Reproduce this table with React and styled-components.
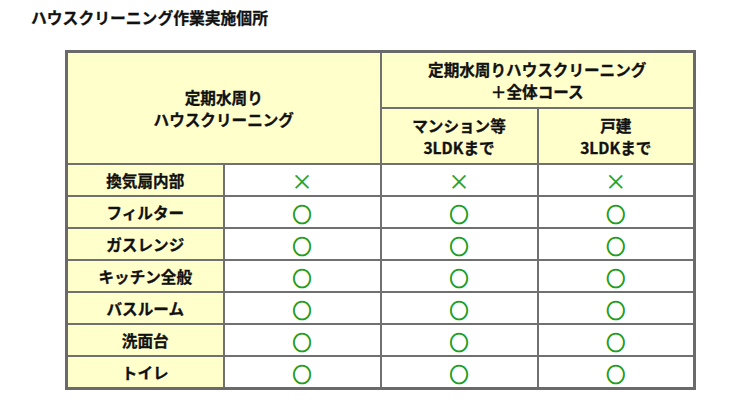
import React from 'react';
import styled, { createGlobalStyle } from 'styled-components';

const GlobalStyle = createGlobalStyle`
  body {
    margin: 0;
    background: #ffffff;
    font-family: "Noto Sans CJK JP", "Noto Sans", sans-serif;
    color: #111111;
  }
`;

const Page = styled.div`
  padding: 7px 0 0 31px;
`;

const Title = styled.h2`
  margin: 0;
  font-size: 15.8px;
  line-height: 22px;
  font-weight: bold;
  -webkit-text-stroke: 0.3px #111111;
`;

const Table = styled.table`
  margin: 21px 0 0 34px;
  border-collapse: collapse;
  table-layout: fixed;
  width: 631px;
  border: 3px solid #6a6a6a;
`;

const Head = styled.th`
  background: #ffffcc;
  border: 2px solid #707070;
  font-size: 15.6px;
  font-weight: bold;
  -webkit-text-stroke: 0.3px #111111;
  line-height: 22.5px;
  text-align: center;
  padding: 0;
  height: 54px;
`;

const Label = styled.th`
  background: #ffffcc;
  border: 2px solid #707070;
  font-size: 15.6px;
  font-weight: bold;
  -webkit-text-stroke: 0.3px #111111;
  line-height: 20px;
  height: 30px;
  padding: 0;
  text-align: center;
`;

const Cell = styled.td`
  background: #ffffff;
  border: 2px solid #707070;
  height: 30px;
  padding: 0;
  text-align: center;
  color: #1f9f24;
  font-size: ${p => (p.$mark === '×' ? 21 : 19)}px;
  line-height: 20px;
  font-weight: ${p => (p.$mark === '×' ? 400 : 700)};
  -webkit-text-stroke: ${p => (p.$mark === '×' ? 0.3 : 0.9)}px #1f9f24;
`;

const Mark = styled.span`
  display: inline-block;
  transform: translateY(${p => (p.$mark === '×' ? 0 : 2)}px);
`;

const rows = [
  ['換気扇内部', '×', '×', '×'],
  ['フィルター', '○', '○', '○'],
  ['ガスレンジ', '○', '○', '○'],
  ['キッチン全般', '○', '○', '○'],
  ['バスルーム', '○', '○', '○'],
  ['洗面台', '○', '○', '○'],
  ['トイレ', '○', '○', '○'],
];

export default function App() {
  return (
    <Page>
      <GlobalStyle />
      <Title>ハウスクリーニング作業実施個所</Title>
      <Table>
        <colgroup>
          <col style={{ width: '25%' }} />
          <col style={{ width: '25%' }} />
          <col style={{ width: '25%' }} />
          <col style={{ width: '25%' }} />
        </colgroup>
        <thead>
          <tr>
            <Head colSpan={2} rowSpan={2}>
              定期水周り<br />ハウスクリーニング
            </Head>
            <Head colSpan={2}>
              定期水周りハウスクリーニング<br />＋全体コース
            </Head>
          </tr>
          <tr>
            <Head>マンション等<br />3LDKまで</Head>
            <Head>戸建<br />3LDKまで</Head>
          </tr>
        </thead>
        <tbody>
          {rows.map(([name, ...marks]) => (
            <tr key={name}>
              <Label>{name}</Label>
              {marks.map((m, i) => (
                <Cell key={i} $mark={m}>
                  <Mark $mark={m}>{m}</Mark>
                </Cell>
              ))}
            </tr>
          ))}
        </tbody>
      </Table>
    </Page>
  );
}
